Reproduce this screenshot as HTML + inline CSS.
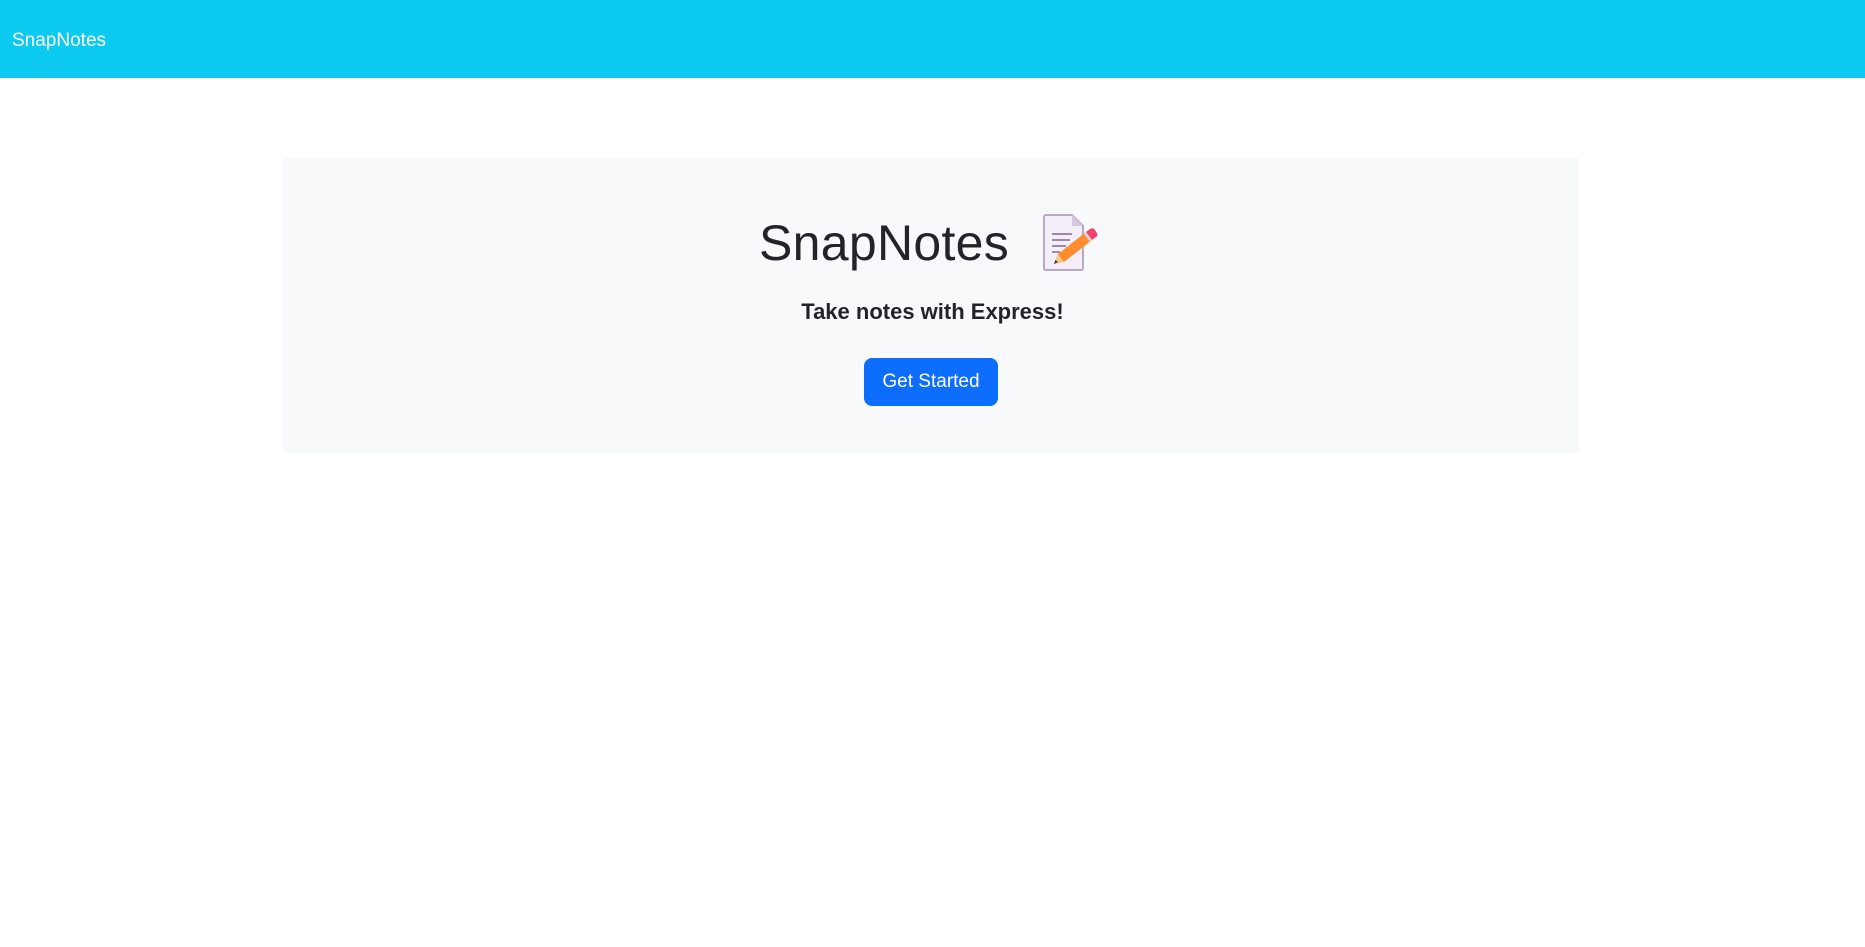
<!DOCTYPE html>
<html><head><meta charset="utf-8"><style>
*{margin:0;padding:0;box-sizing:border-box}
body{width:1865px;height:947px;background:#fff;font-family:"Liberation Sans",sans-serif;overflow:hidden;position:relative}
.nav{position:absolute;left:0;top:0;width:1865px;height:78px;background:#0dcaf0}
.brand{position:absolute;left:12px;top:29px;font-size:19px;color:#fff;line-height:24px}
.jumbo{position:absolute;left:283px;top:158px;width:1296px;height:295px;background:#f8f9fa}
.title{position:absolute;left:759px;top:211px;font-size:50px;font-weight:300;color:#212529;line-height:64px;letter-spacing:0.3px}
.sub{position:absolute;left:0;width:1865px;top:298px;text-align:center;font-size:22px;font-weight:bold;color:#212529;line-height:28px}
.btn{position:absolute;left:864px;top:358px;width:134px;height:48px;background:#0d6efd;border-radius:8px;color:#fff;font-size:19px;line-height:48px;text-align:center}
svg{position:absolute;left:1040px;top:210px}
</style></head><body>
<div class="nav"><div class="brand">SnapNotes</div></div>
<div class="jumbo"></div>
<div class="title">SnapNotes</div>
<svg width="64" height="64" viewBox="0 0 64 64">
<path d="M6 5 H32 L43 16 V58 Q43 60 41 60 H6 Q4 60 4 58 V7 Q4 5 6 5Z" fill="#f3eef7" stroke="#b9a9c3" stroke-width="2"/>
<path d="M32 5 V16 H43Z" fill="#d6c9df"/>
<g stroke="#9b8aa8" stroke-width="2"><line x1="12" y1="24" x2="32" y2="24"/><line x1="12" y1="30" x2="30" y2="30"/><line x1="12" y1="36" x2="26" y2="36"/><line x1="12" y1="42" x2="20" y2="42"/></g>
<path d="M14 54 L18 44 L46 22 L52 30 L24 52Z" fill="#ff8c2e"/>
<path d="M46 22 L50 19 Q53 17 55 20 L57 23 Q58 26 56 27 L52 30Z" fill="#f7406a"/>
<path d="M44 24 L50 32 L52 30 L46 22Z" fill="#d9d0d9"/>
<path d="M14 54 L18 44 L24 52Z" fill="#f5c98a"/>
<path d="M14 54 L15.5 50 L18 52Z" fill="#333"/>
</svg>
<div class="sub">Take notes with Express!</div>
<div class="btn">Get Started</div>
</body></html>
